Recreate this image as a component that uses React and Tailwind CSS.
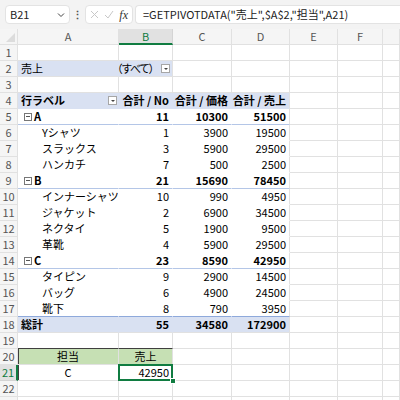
import React from 'react';
import clsx from 'clsx';

const COLS = [
  { key: 'A', w: 'w-[101px]' },
  { key: 'B', w: 'w-[54px]' },
  { key: 'C', w: 'w-[59px]' },
  { key: 'D', w: 'w-[58px]' },
  { key: 'E', w: 'w-[48px]' },
  { key: 'F', w: 'w-[45px]' },
  { key: 'G', w: 'w-[17px]' },
];

const GRID = 'border-[#e1e1e1]';

const pivotRows = [
  { r: 5, label: 'A', group: true, v: [11, 10300, 51500] },
  { r: 6, label: 'Yシャツ', v: [1, 3900, 19500] },
  { r: 7, label: 'スラックス', v: [3, 5900, 29500] },
  { r: 8, label: 'ハンカチ', v: [7, 500, 2500] },
  { r: 9, label: 'B', group: true, v: [21, 15690, 78450] },
  { r: 10, label: 'インナーシャツ', v: [10, 990, 4950] },
  { r: 11, label: 'ジャケット', v: [2, 6900, 34500] },
  { r: 12, label: 'ネクタイ', v: [5, 1900, 9500] },
  { r: 13, label: '革靴', v: [4, 5900, 29500] },
  { r: 14, label: 'C', group: true, v: [23, 8590, 42950] },
  { r: 15, label: 'タイピン', v: [9, 2900, 14500] },
  { r: 16, label: 'バッグ', v: [6, 4900, 24500] },
  { r: 17, label: '靴下', v: [8, 790, 3950], last: true },
];

function DropBtn() {
  return (
    <span className="shrink-0 w-[9px] h-[9px] border border-[#a6a6a6] bg-white flex items-center justify-center">
      <span className="w-0 h-0 border-l-[2px] border-r-[2px] border-t-[2px] border-l-transparent border-r-transparent border-t-[#444]" />
    </span>
  );
}

function Collapse() {
  return (
    <span className="w-[8px] h-[8px] border border-[#777] flex items-center justify-center mr-[2px]">
      <span className="w-[4px] h-px bg-[#555]" />
    </span>
  );
}

function Cell({ col, className, children }) {
  return (
    <div className={clsx('shrink-0 h-full border-r border-b flex items-center px-[3px] overflow-hidden whitespace-nowrap', col.w, className)}>
      {children}
    </div>
  );
}

function Row({ n, selected, cells = {} }) {
  return (
    <div className="flex h-[16px]">
      <div
        className={clsx(
          'w-[18px] shrink-0 h-full border-b border-r flex items-center justify-center text-[11px]',
          selected ? 'bg-[#e1e1e1] text-[#107c41] border-r-2 border-r-[#107c41] border-b-[#d4d4d4]' : 'bg-[#f5f5f5] text-[#555] border-[#e1e1e1]'
        )}
      >
        {n}
      </div>
      {COLS.map((c) => {
        const cell = cells[c.key] || {};
        return (
          <Cell key={c.key} col={c} className={clsx(GRID, cell.cls)}>
            {cell.content}
          </Cell>
        );
      })}
    </div>
  );
}

export default function App() {
  const blue = 'bg-[#d9e1f2]';
  const rows = [];
  rows.push(<Row key={1} n={1} />);
  rows.push(
    <Row
      key={2}
      n={2}
      cells={{
        A: { cls: clsx(blue, 'border-r-[#d9e1f2]'), content: '売上' },
        B: {
          cls: clsx(blue, 'justify-end gap-[3px] pr-[2px] pl-0 overflow-visible'),
          content: (<><span className="tracking-[-1.5px]">（すべて）</span><DropBtn /></>),
        },
      }}
    />
  );
  rows.push(<Row key={3} n={3} />);
  rows.push(
    <Row
      key={4}
      n={4}
      cells={{
        A: { cls: clsx(blue, 'border-r-[#d9e1f2] border-b-[#d9e1f2] justify-between font-bold pr-[1px]'), content: (<><span>行ラベル</span><DropBtn /></>) },
        B: { cls: clsx(blue, 'border-r-[#d9e1f2] border-b-[#d9e1f2] justify-end font-bold'), content: '合計 / No' },
        C: { cls: clsx(blue, 'border-r-[#d9e1f2] border-b-[#d9e1f2] justify-end font-bold'), content: '合計 / 価格' },
        D: { cls: clsx(blue, 'border-b-[#d9e1f2] justify-end font-bold'), content: '合計 / 売上' },
      }}
    />
  );
  pivotRows.forEach((p) => {
    const bb = p.group ? 'border-b-[#b4c6e7]' : p.last ? 'border-b-[#8ea9db]' : 'border-b-white';
    rows.push(
      <Row
        key={p.r}
        n={p.r}
        cells={{
          A: {
            cls: clsx('bg-white border-r-white', bb, p.group ? 'font-bold pl-[6px]' : 'pl-[24px]'),
            content: p.group ? (<><Collapse /><span>{p.label}</span></>) : p.label,
          },
          B: { cls: clsx('bg-white border-r-white justify-end', bb, p.group && 'font-bold'), content: p.v[0] },
          C: { cls: clsx('bg-white border-r-white justify-end', bb, p.group && 'font-bold'), content: p.v[1] },
          D: { cls: clsx('bg-white justify-end', bb, p.group && 'font-bold'), content: p.v[2] },
        }}
      />
    );
  });
  rows.push(
    <Row
      key={18}
      n={18}
      cells={{
        A: { cls: clsx(blue, 'border-r-[#d9e1f2] font-bold'), content: '総計' },
        B: { cls: clsx(blue, 'border-r-[#d9e1f2] justify-end font-bold'), content: 55 },
        C: { cls: clsx(blue, 'border-r-[#d9e1f2] justify-end font-bold'), content: 34580 },
        D: { cls: clsx(blue, 'justify-end font-bold'), content: 172900 },
      }}
    />
  );
  rows.push(
    <Row
      key={19}
      n={19}
      cells={{
        A: { cls: 'border-b-[#3f3f3f]' },
        B: { cls: 'border-b-[#3f3f3f]' },
      }}
    />
  );
  rows.push(
    <Row
      key={20}
      n={20}
      cells={{
        A: { cls: 'bg-[#c6e0b4] border-[#3f3f3f] justify-center shadow-[inset_1px_0_0_#3f3f3f]', content: '担当' },
        B: { cls: 'bg-[#c6e0b4] border-[#3f3f3f] justify-center', content: '売上' },
      }}
    />
  );
  rows.push(
    <Row
      key={21}
      n={21}
      selected
      cells={{
        A: { cls: 'border-[#3f3f3f] justify-center shadow-[inset_1px_0_0_#3f3f3f]', content: 'C' },
        B: {
          cls: 'border-[#3f3f3f] justify-end relative overflow-visible',
          content: (
            <>
              <span>42950</span>
              <span className="absolute -left-px -top-px -right-px -bottom-px border-2 border-[#107c41]" />
              <span className="absolute -right-[4px] -bottom-[4px] w-[6px] h-[6px] bg-[#107c41] border border-white z-10" />
            </>
          ),
        },
      }}
    />
  );
  rows.push(<Row key={22} n={22} />);
  rows.push(<Row key={23} n="" />);

  return (
    <div className="w-[400px] h-[400px] overflow-hidden bg-white text-[11px] text-black" style={{ fontFamily: '"Noto Sans CJK JP", "Noto Sans", sans-serif' }}>
      {/* formula bar */}
      <div className="h-[29px] bg-[#f3f3f3] flex items-start pt-[5px] pl-[5px]">
        <div className="w-[65px] h-[19px] bg-white border border-[#e3e3e3] rounded-[4px] flex items-center justify-between pl-[4px] pr-[4px] text-[#222]">
          <span>B21</span>
          <svg width="8" height="8" viewBox="0 0 8 8" className="text-[#444]">
            <path d="M1 2.5 L4 5.5 L7 2.5" fill="none" stroke="currentColor" strokeWidth="1" />
          </svg>
        </div>
        <div className="w-[15px] h-[19px] flex items-center justify-center text-[#555] font-bold leading-none">⋮</div>
        <div className="w-[48px] h-[19px] bg-white border border-[#e3e3e3] rounded-[4px] flex items-center justify-between px-[4px]">
          <svg width="9" height="9" viewBox="0 0 9 9">
            <path d="M1 1 L8 8 M8 1 L1 8" stroke="#c8c8c8" strokeWidth="1" fill="none" />
          </svg>
          <svg width="10" height="9" viewBox="0 0 10 9">
            <path d="M1 5 L4 8 L9 1" stroke="#c8c8c8" strokeWidth="1" fill="none" />
          </svg>
          <span className="italic text-[12px] text-[#333] leading-none" style={{ fontFamily: '"Liberation Serif", serif' }}>fx</span>
        </div>
        <div className="ml-[2px] flex-1 h-[19px] bg-white border border-[#e3e3e3] rounded-l-[4px] border-r-0 flex items-center pl-[7px] text-[#222] whitespace-nowrap">
          =GETPIVOTDATA("売上",$A$2,"担当",A21)
        </div>
      </div>
      {/* column headers */}
      <div className="flex h-[16px]">
        <div className="w-[18px] shrink-0 h-full bg-[#f5f5f5] border-r border-b border-[#e1e1e1] relative">
          <span className="absolute right-[2px] bottom-[2px] w-0 h-0 border-b-[9px] border-l-[9px] border-b-[#dcdcdc] border-l-transparent" />
        </div>
        {COLS.map((c) => (
          <div
            key={c.key}
            className={clsx(
              'shrink-0 h-full border-r flex items-center justify-center',
              c.w,
              c.key === 'B' ? 'bg-[#e1e1e1] text-[#107c41] border-b-2 border-b-[#107c41] border-r-[#d4d4d4]' : 'bg-[#f5f5f5] text-[#555] border-b border-[#e1e1e1]'
            )}
          >
            {c.key !== 'G' && c.key}
          </div>
        ))}
      </div>
      {rows}
    </div>
  );
}
